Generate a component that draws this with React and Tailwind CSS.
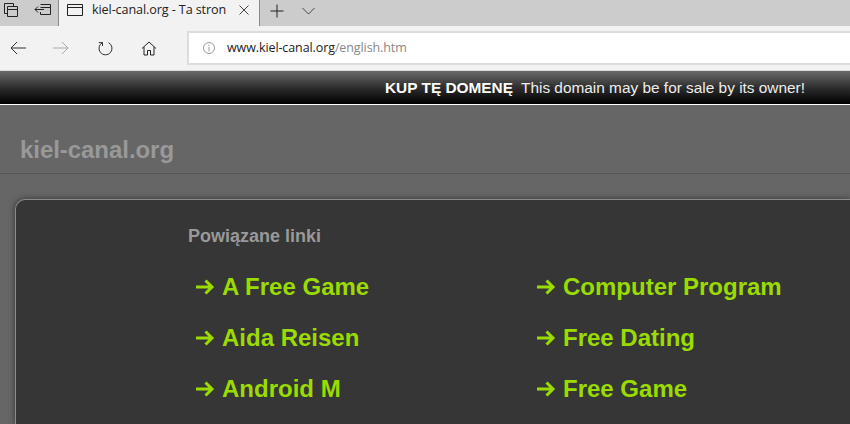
import React from "react";

const ui = { fontFamily: '"Open Sans", "Noto Sans", sans-serif' };
const Ico = ({ w = 20, h = 20, children, className = "" }) => (
  <svg width={w} height={h} viewBox={`0 0 ${w} ${h}`} fill="none" stroke="currentColor" strokeWidth="1" className={"shrink-0 " + className}>
    {children}
  </svg>
);

const Link = ({ children }) => (
  <div className="flex items-center h-[51px]">
    <svg width="20" height="18" viewBox="0 0 20 18" fill="none" stroke="#9bdc00" strokeWidth="3" className="shrink-0 ml-[1px] mr-[7px]">
      <path d="M1 9H17M10.5 2.5L17 9L10.5 15.5" />
    </svg>
    <span>{children}</span>
  </div>
);

export default function App() {
  return (
    <div className="w-[850px] h-[424px] overflow-hidden flex flex-col bg-[#666666]">
      <div className="h-[26px] bg-[#cccccc] flex text-[#222]" style={ui}>
        <div className="w-[59px] flex items-center pl-[3px] pb-[6px] gap-[15px] border-r border-[#8a8a8a]">
          <Ico w={16} h={16}>
            <path d="M1.5 1.5H10.5V4M1.5 1.5V11.5H4M4.5 4.5H14.5V14.5H4.5ZM4.5 7.5H14.5" />
          </Ico>
          <Ico w={18} h={16}>
            <path d="M6.5 2.5H16.5V12.5H6.5V10M6.5 5.5H16.5M1 7.5H10M4 4.5L1 7.5L4 10.5" />
          </Ico>
        </div>
        <div className="w-[201px] bg-[#f2f2f2] flex items-center pl-[8px] pb-[6px] border-r border-[#8a8a8a]">
          <Ico w={16} h={14}>
            <path d="M0.5 1.5H15.5V12.5H0.5ZM0.5 4.5H15.5" />
          </Ico>
          <span className="ml-[9px] w-[135px] text-[12.6px] whitespace-nowrap overflow-hidden tracking-[-0.1px]">kiel-canal.org - Ta stron</span>
          <Ico w={10} h={10} className="ml-[12px] text-[#444]">
            <path d="M0.5 0.5L9.5 9.5M9.5 0.5L0.5 9.5" />
          </Ico>
        </div>
        <div className="flex items-center pl-[10px] pb-[4px] gap-[18px]">
          <Ico w={14} h={14}>
            <path d="M7 0.5V13.5M0.5 7H13.5" />
          </Ico>
          <Ico w={13} h={8} className="text-[#444]">
            <path d="M0.5 1L6.5 7L12.5 1" />
          </Ico>
        </div>
      </div>

      <div className="h-[45px] bg-[#f2f2f2] flex items-center border-b border-[#d9d9d9]" style={ui}>
        <div className="w-[187px] flex items-center pl-[10px]">
          <Ico w={16} h={14} className="text-[#333]">
            <path d="M16 7H1M7 1L1 7L7 13" />
          </Ico>
          <Ico w={16} h={14} className="ml-[27px] text-[#aaa]">
            <path d="M0 7H15M9 1L15 7L9 13" />
          </Ico>
          <Ico w={15} h={15} className="ml-[29px] text-[#333]">
            <path d="M4.5 1.6A6.5 6.5 0 1 0 10.5 1.6M0.8 1.6H4.5V5" />
          </Ico>
          <Ico w={16} h={15} className="ml-[28px] text-[#222]">
            <path d="M1 7.5L8 1L15 7.5M3 6V14H6.5V9.5H9.5V14H13V6" />
          </Ico>
        </div>
        <div className="flex-1 h-[34px] bg-white border-y-2 border-l-2 border-[#dcdcdc] flex items-center pl-[13px] text-[12.5px] tracking-[-0.1px]">
          <svg width="14" height="14" viewBox="0 0 14 14" fill="none" stroke="#999" className="shrink-0">
            <circle cx="7" cy="7" r="5.5" />
            <path d="M7 6V10.5M7 3.5V5" />
          </svg>
          <span className="ml-[11px] text-[#222]">www.kiel-canal.org</span>
          <span className="text-[#888]">/english.htm</span>
        </div>
      </div>

      <div className="h-[33px] bg-[linear-gradient(#6a6a6a,#2e2e2e_50%,#000)] flex items-center justify-end pr-[45px] pt-[1px] text-[15.4px] text-white" style={{ fontFamily: '"Liberation Sans", sans-serif' }}>
        <b className="mr-[8px]">KUP TĘ DOMENĘ</b>
        <span className="text-[#eeeeee]">This domain may be for sale by its owner!</span>
      </div>
      <div className="h-[1px] bg-white" />

      <div className="flex-1 bg-[#666666] flex flex-col" style={{ fontFamily: '"Liberation Sans", sans-serif' }}>
        <div className="h-[69px] border-b border-[#555555] flex items-end pl-[20px] pb-[9px]">
          <span className="text-[24px] leading-[28px] font-bold text-[#999999] tracking-[-0.05px]">kiel-canal.org</span>
        </div>
        <div className="flex-1 ml-[15px] mt-[25px] bg-[#363636] border border-[#8c8c8c] border-r-0 border-b-0 rounded-tl-[10px] shadow-[0_0_6px_#333] pl-[172px] pt-[26px]">
          <div className="text-[18px] leading-[21px] font-bold text-[#999999]">Powiązane linki</div>
          <div className="mt-[14px] pl-[6px] grid grid-cols-[341px_1fr] text-[24px] font-bold text-[#9bdc00] leading-[29px]">
            <Link>A Free Game</Link>
            <Link>Computer Program</Link>
            <Link>Aida Reisen</Link>
            <Link>Free Dating</Link>
            <Link>Android M</Link>
            <Link>Free Game</Link>
          </div>
        </div>
      </div>
    </div>
  );
}
